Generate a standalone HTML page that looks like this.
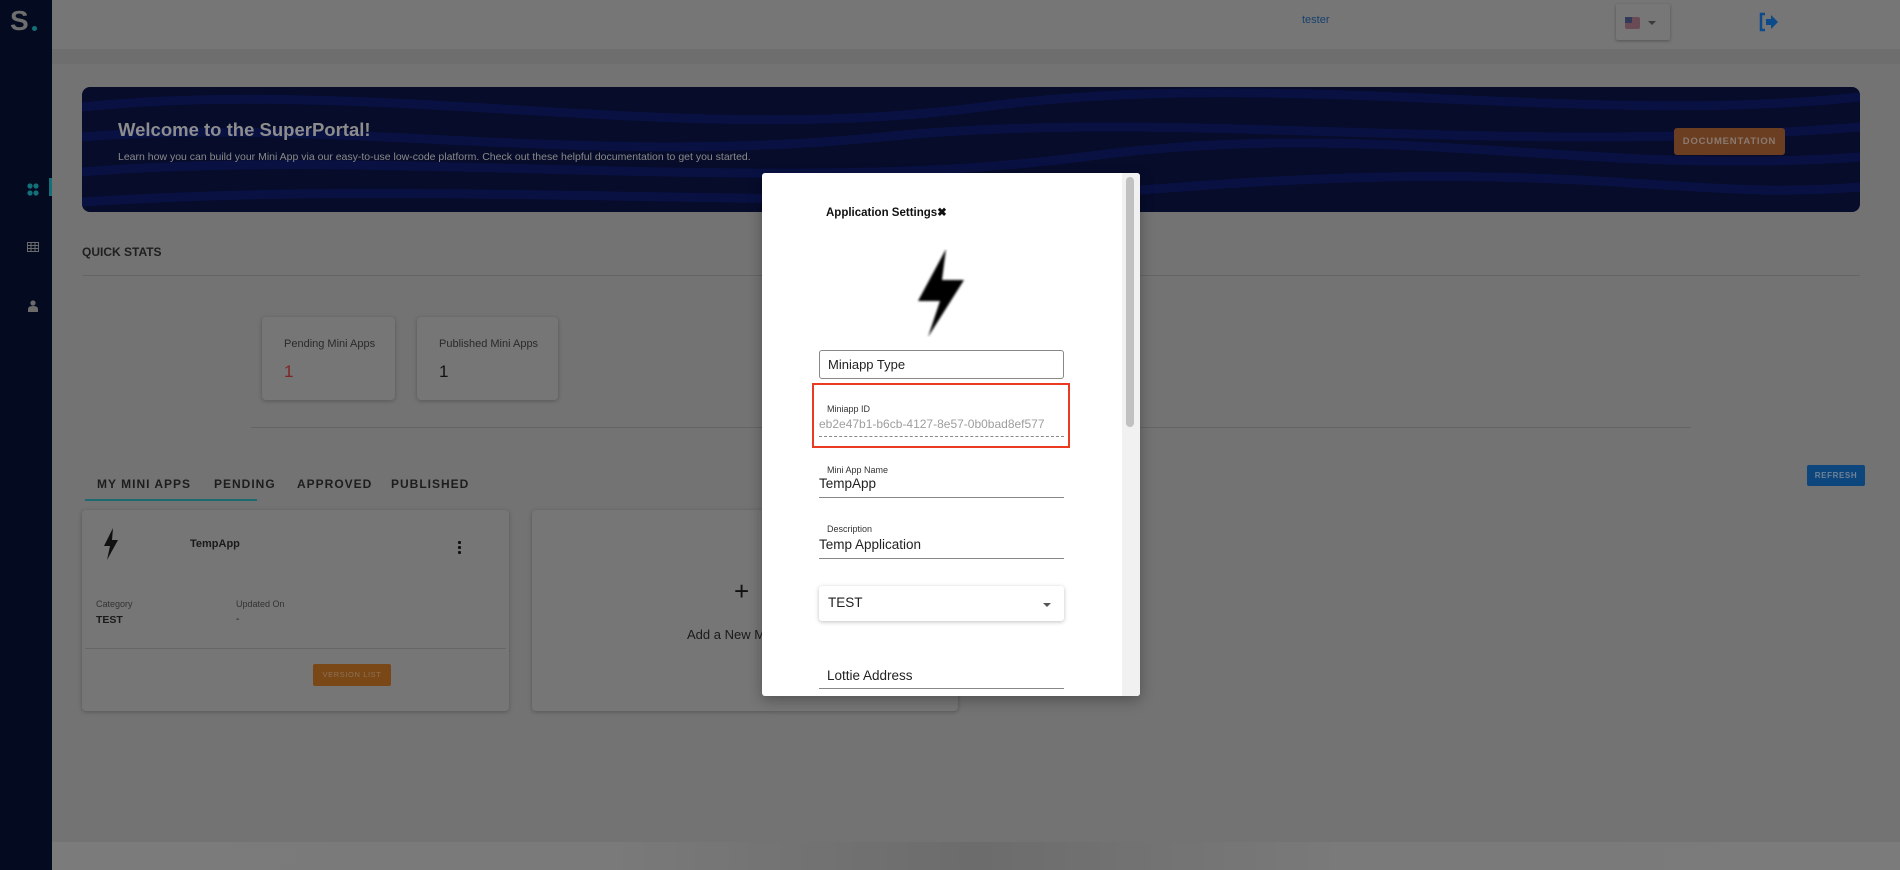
<!DOCTYPE html>
<html><head><meta charset="utf-8"><style>
*{margin:0;padding:0;box-sizing:border-box}
body{width:1900px;height:870px;overflow:hidden;background:#737373;font-family:"Liberation Sans",sans-serif;position:relative}
.a{position:absolute}
.sb{left:0;top:0;width:52px;height:870px;background:#040b20}
.hdr{left:52px;top:0;width:1848px;height:49px;background:#767676}
.band{left:52px;top:49px;width:1848px;height:15px;background:#6e6e6e}
.banner{left:82px;top:87px;width:1778px;height:125px;border-radius:8px;background:#060c2a;overflow:hidden}
.card{background:#767676;box-shadow:0 1px 4px rgba(0,0,0,.25);border-radius:4px}
.tab{top:477px;font-size:12px;font-weight:bold;letter-spacing:1px;color:#1d1d1d}
.lbl{font-size:9px;color:#333}
.val{font-size:13.5px;color:#222}
.ln{height:1px;background:#888}
</style></head><body>
<div class="a sb"></div>
<div class="a" style="left:10px;top:5px;font-size:28px;font-weight:bold;color:#6e6e6e">S</div>
<div class="a" style="left:32px;top:26px;width:5px;height:5px;border-radius:50%;background:#137078"></div>
<svg class="a" style="left:27px;top:181px" width="12" height="18"><circle cx="3" cy="5" r="2.6" fill="#137078"/><circle cx="9" cy="5" r="2.6" fill="#137078"/><circle cx="3" cy="12" r="2.6" fill="#137078"/><circle cx="9" cy="12" r="2.6" fill="#137078"/></svg>
<div class="a" style="left:49px;top:178px;width:3px;height:18px;background:#137078"></div>
<svg class="a" style="left:27px;top:242px" width="12" height="10"><rect x=".5" y=".5" width="11" height="9" fill="none" stroke="#6b6b6b"/><path d="M0 3.5H12M0 6.5H12M4 0V10M8 0V10" stroke="#6b6b6b"/></svg>
<svg class="a" style="left:28px;top:300px" width="10" height="12"><circle cx="5" cy="3" r="2.6" fill="#6b6b6b"/><path d="M0 12V9Q0 6 5 6Q10 6 10 9V12Z" fill="#6b6b6b"/></svg>

<div class="a hdr"></div>
<div class="a band"></div>
<div class="a" style="left:1302px;top:14px;font-size:11px;color:#17406e">tester</div>
<div class="a" style="left:1616px;top:4px;width:54px;height:36px;background:#777;box-shadow:0 1px 3px rgba(0,0,0,.3);border-radius:2px"></div>
<div class="a" style="left:1625px;top:17px;width:15px;height:12px;background:#6a4b55;border-radius:2px"></div>
<div class="a" style="left:1625px;top:17px;width:7px;height:6px;background:#323a5a"></div>
<div class="a" style="left:1648px;top:21px;width:0;height:0;border-left:4px solid transparent;border-right:4px solid transparent;border-top:4px solid #3a3a3a"></div>
<svg class="a" style="left:1759px;top:12px" width="20" height="20"><path d="M6 2H2V18H6" fill="none" stroke="#0c4a8a" stroke-width="2.5"/><path d="M7 7H12V3L19 10L12 17V13H7Z" fill="#0c4a8a"/></svg>

<div class="a banner">
<svg width="1778" height="125" style="position:absolute;left:0;top:0"><g fill="none" stroke="#0a1246" stroke-width="9" opacity=".9">
<path d="M0 20 C300 -10 600 60 900 20 S1500 40 1778 10"/>
<path d="M0 50 C250 30 500 80 800 50 S1400 70 1778 40"/>
<path d="M0 85 C300 60 700 110 1000 70 S1500 90 1778 70"/>
<path d="M0 115 C400 90 700 130 1100 100 S1600 115 1778 100"/>
</g></svg>
<div class="a" style="left:36px;top:32px;font-size:18.5px;font-weight:bold;color:#8d8d8d">Welcome to the SuperPortal!</div>
<div class="a" style="left:36px;top:64px;font-size:10.5px;color:#8a8a8a">Learn how you can build your Mini App via our easy-to-use low-code platform. Check out these helpful documentation to get you started.</div>
<div class="a" style="left:1592px;top:41px;width:111px;height:27px;background:#6b3e22;border-radius:3px;color:#8a7a70;font-size:9.5px;font-weight:bold;letter-spacing:.8px;text-align:center;line-height:27px">DOCUMENTATION</div>
</div>

<div class="a" style="left:82px;top:245px;font-size:12px;font-weight:bold;color:#1f1f1f">QUICK STATS</div>
<div class="a" style="left:82px;top:275px;width:1778px;height:1px;background:#656565"></div>
<div class="a card" style="left:262px;top:317px;width:133px;height:83px"><div class="a" style="left:22px;top:21px;font-size:11px;color:#2a2a2a">Pending Mini Apps</div><div class="a" style="left:22px;top:45px;font-size:17px;color:#7e2424">1</div></div>
<div class="a card" style="left:417px;top:317px;width:141px;height:83px"><div class="a" style="left:22px;top:21px;font-size:11px;color:#2a2a2a">Published Mini Apps</div><div class="a" style="left:22px;top:45px;font-size:17px;color:#111">1</div></div>
<div class="a" style="left:251px;top:427px;width:1440px;height:1px;background:#656565"></div>

<div class="a tab" style="left:97px">MY MINI APPS</div>
<div class="a tab" style="left:214px">PENDING</div>
<div class="a tab" style="left:297px">APPROVED</div>
<div class="a tab" style="left:391px">PUBLISHED</div>
<div class="a" style="left:85px;top:499px;width:172px;height:2px;background:#1c6a70"></div>
<div class="a" style="left:1807px;top:465px;width:58px;height:21px;background:#0d467c;border-radius:2px;color:#6f8297;font-size:8px;font-weight:bold;letter-spacing:.6px;text-align:center;line-height:21px">REFRESH</div>

<div class="a card" style="left:82px;top:510px;width:427px;height:201px">
<svg class="a" style="left:20px;top:18px" width="18" height="32"><path d="M11 0L2 18H8L5 32L16 12H10Z" fill="#111"/></svg>
<div class="a" style="left:108px;top:28px;font-size:11px;font-weight:bold;color:#1a1a1a">TempApp</div>
<div class="a" style="left:376px;top:30px;width:3px;height:14px;background:radial-gradient(circle,#111 1.5px,transparent 1.6px) 0 0/3px 5px"></div>
<div class="a" style="left:14px;top:89px;font-size:9px;color:#333">Category</div>
<div class="a" style="left:14px;top:104px;font-size:10.5px;font-weight:bold;color:#1a1a1a">TEST</div>
<div class="a" style="left:154px;top:89px;font-size:9px;color:#333">Updated On</div>
<div class="a" style="left:154px;top:104px;font-size:10px;color:#1a1a1a">-</div>
<div class="a" style="left:3px;top:138px;width:421px;height:1px;background:#666"></div>
<div class="a" style="left:231px;top:154px;width:78px;height:22px;background:#7a4716;border-radius:2px;color:#8e7357;font-size:7.5px;letter-spacing:.6px;text-align:center;line-height:22px">VERSION LIST</div>
</div>
<div class="a card" style="left:532px;top:510px;width:426px;height:201px">
<div class="a" style="left:202px;top:66px;font-size:26px;color:#111">+</div>
<div class="a" style="left:155px;top:117px;font-size:13px;color:#1a1a1a">Add a New Mini App</div>
</div>
<div class="a" style="left:52px;top:842px;width:1848px;height:28px;background:linear-gradient(90deg,#7b7b7b,#7a7a7a 30%,#6c6c6c 50%,#7a7a7a 70%,#7b7b7b)"></div>

<div class="a" style="left:762px;top:173px;width:378px;height:523px;background:#fff;border-radius:3px;box-shadow:0 4px 14px rgba(0,0,0,.3);overflow:hidden">
<div class="a" style="left:360px;top:0;width:18px;height:523px;background:#f1f1f1"></div>
<div class="a" style="left:364px;top:4px;width:8px;height:250px;background:#c1c1c1;border-radius:4px"></div>
<div class="a" style="left:64px;top:32px;font-size:11.5px;font-weight:bold;color:#111">Application Settings✖</div>
<svg class="a" style="left:154px;top:76px" width="50" height="88"><path d="M30 0L2 52H24L12 88L48 31H26Z" fill="#000" style="filter:blur(1px)"/></svg>
<div class="a" style="left:57px;top:177px;width:245px;height:29px;border:1px solid #888;border-radius:3px"></div>
<div class="a" style="left:66px;top:184px;font-size:13px;color:#222">Miniapp Type</div>
<div class="a" style="left:50px;top:210px;width:258px;height:65px;border:2px solid #ea3a1f"></div>
<div class="a lbl" style="left:65px;top:231px">Miniapp ID</div>
<div class="a" style="left:57px;top:244px;font-size:12px;color:#9e9e9e">eb2e47b1-b6cb-4127-8e57-0b0bad8ef577</div>
<div class="a" style="left:57px;top:263px;width:245px;border-top:1px dashed #888"></div>
<div class="a lbl" style="left:65px;top:292px">Mini App Name</div>
<div class="a val" style="left:57px;top:303px">TempApp</div>
<div class="a ln" style="left:57px;top:324px;width:245px"></div>
<div class="a lbl" style="left:65px;top:351px">Description</div>
<div class="a val" style="left:57px;top:364px">Temp Application</div>
<div class="a ln" style="left:57px;top:385px;width:245px"></div>
<div class="a" style="left:57px;top:413px;width:245px;height:35px;border-radius:3px;box-shadow:0 1px 4px rgba(0,0,0,.25)"></div>
<div class="a val" style="left:66px;top:422px">TEST</div>
<div class="a" style="left:281px;top:430px;border-left:4px solid transparent;border-right:4px solid transparent;border-top:4px solid #555"></div>
<div class="a val" style="left:65px;top:495px">Lottie Address</div>
<div class="a ln" style="left:57px;top:515px;width:245px"></div>
</div>
</body></html>
